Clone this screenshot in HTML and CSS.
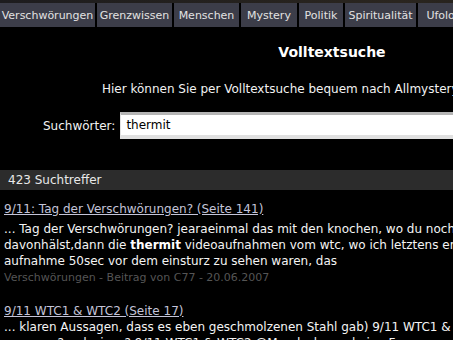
FILE: index.html
```html
<!DOCTYPE html>
<html lang="de">
<head>
<meta charset="utf-8">
<title>Volltextsuche</title>
<link rel="stylesheet" href="styles.css">
</head>
<body>
<div class="page">
  <div class="topstrip"></div>
  <nav class="nav">
    <a class="tab t1">Verschwörungen</a>
    <a class="tab t2">Grenzwissen</a>
    <a class="tab t3">Menschen</a>
    <a class="tab t4">Mystery</a>
    <a class="tab t5">Politik</a>
    <a class="tab t6">Spiritualität</a>
    <a class="tab t7">Ufologie</a>
    <a class="tab t8">Unterhaltung</a>
  </nav>
  <div class="head">
    <h1 class="title">Volltextsuche</h1>
    <p class="intro">Hier können Sie per Volltextsuche bequem nach Allmystery Themen suchen.</p>
  </div>
  <form class="search">
    <label class="label" for="q">Suchwörter:</label>
    <input class="input" id="q" type="text" value="thermit">
  </form>
  <div class="countbar">423 Suchtreffer</div>
  <div class="results">
    <div class="result">
      <a class="rlink" href="#">9/11: Tag der Verschwörungen? (Seite 141)</a>
      <p class="snippet">... Tag der Verschwörungen? jearaeinmal das mit den knochen, wo du noch nicht weißt was du davonhälst,dann die <b>thermit</b> videoaufnahmen vom wtc, wo ich letztens erst gesehen habe, das auf der aufnahme 50sec vor dem einsturz zu sehen waren, das</p>
      <div class="meta">Verschwörungen - Beitrag von C77 - 20.06.2007</div>
    </div>
    <div class="result second">
      <a class="rlink" href="#">9/11 WTC1 &amp; WTC2 (Seite 17)</a>
      <p class="snippet">... klaren Aussagen, dass es eben geschmolzenen Stahl gab) 9/11 WTC1 &amp; WTC2 wären notwendig gewesen?und wieso? 9/11 WTC1 &amp; WTC2 @Mondsohn mal eine Frage</p>
      <div class="meta">Verschwörungen - Beitrag von Mondsohn - 12.03.2009</div>
    </div>
  </div>
</div>
</body>
</html>
```
FILE: styles.css
```css
html, body {
  margin: 0;
  padding: 0;
  background: #000;
  overflow: hidden;
}
body {
  font-family: "DejaVu Sans", Verdana, sans-serif;
  font-size: 12px;
  color: #ececec;
}
.page {
  width: 664px;
}
.topstrip {
  height: 3px;
  background: linear-gradient(to right, #1d1c1e, #2a251f 60%, #1f1c1a);
}
.nav {
  display: flex;
  height: 24px;
  gap: 2px;
  background: #000;
}
.tab {
  display: flex;
  align-items: center;
  justify-content: center;
  background: #3c3d49;
  color: #e2e2e2;
  font-size: 11px;
  text-decoration: none;
  white-space: nowrap;
  flex: none;
}
.t1 { width: 95px; }
.t2 { width: 75px; }
.t3 { width: 65px; }
.t4 { width: 56px; }
.t5 { width: 44px; }
.t6 { width: 71px; }
.t7 { width: 62px; }
.t8 { width: 90px; }
.head {
  text-align: center;
}
.title {
  margin: 0;
  padding-top: 16px;
  font-size: 14px;
  font-weight: bold;
  color: #fff;
  line-height: 18px;
}
.intro {
  margin: 20px 0 0;
  font-size: 12px;
  line-height: 16px;
  color: #f2f2f2;
}
.search {
  display: flex;
  align-items: center;
  margin-top: 15px;
  padding-left: 43px;
  gap: 5px;
}
.label {
  font-size: 12px;
  color: #f2f2f2;
}
.input {
  width: 560px;
  height: 27px;
  box-sizing: border-box;
  border: 1px solid #e2e2e2;
  border-top: 3px solid #b5b5b5;
  border-bottom: 4px solid #e0e0e0;
  background: #fff;
  padding: 0 5px;
  font-family: "DejaVu Sans", sans-serif;
  font-size: 12px;
  color: #000;
}
.countbar {
  margin-top: 31px;
  height: 20px;
  line-height: 20px;
  background: #2c2c2c;
  padding-left: 8px;
  color: #e8e8e8;
  font-size: 12px;
}
.results {
  padding: 0 4px;
}
.result {
  margin-top: 11px;
  line-height: 16px;
}
.result.second {
  margin-top: 18px;
}
.rlink {
  display: block;
  color: #c4c4d8;
  text-decoration: underline;
  font-size: 12px;
  margin-bottom: 4px;
}
.second .rlink {
  margin-bottom: 0;
}
.snippet {
  margin: 0;
  font-size: 12px;
  color: #f4f4f4;
}
.snippet b {
  color: #fff;
}
.meta {
  font-size: 11px;
  color: #555;
  line-height: 15px;
  margin-top: 1px;
}
```
